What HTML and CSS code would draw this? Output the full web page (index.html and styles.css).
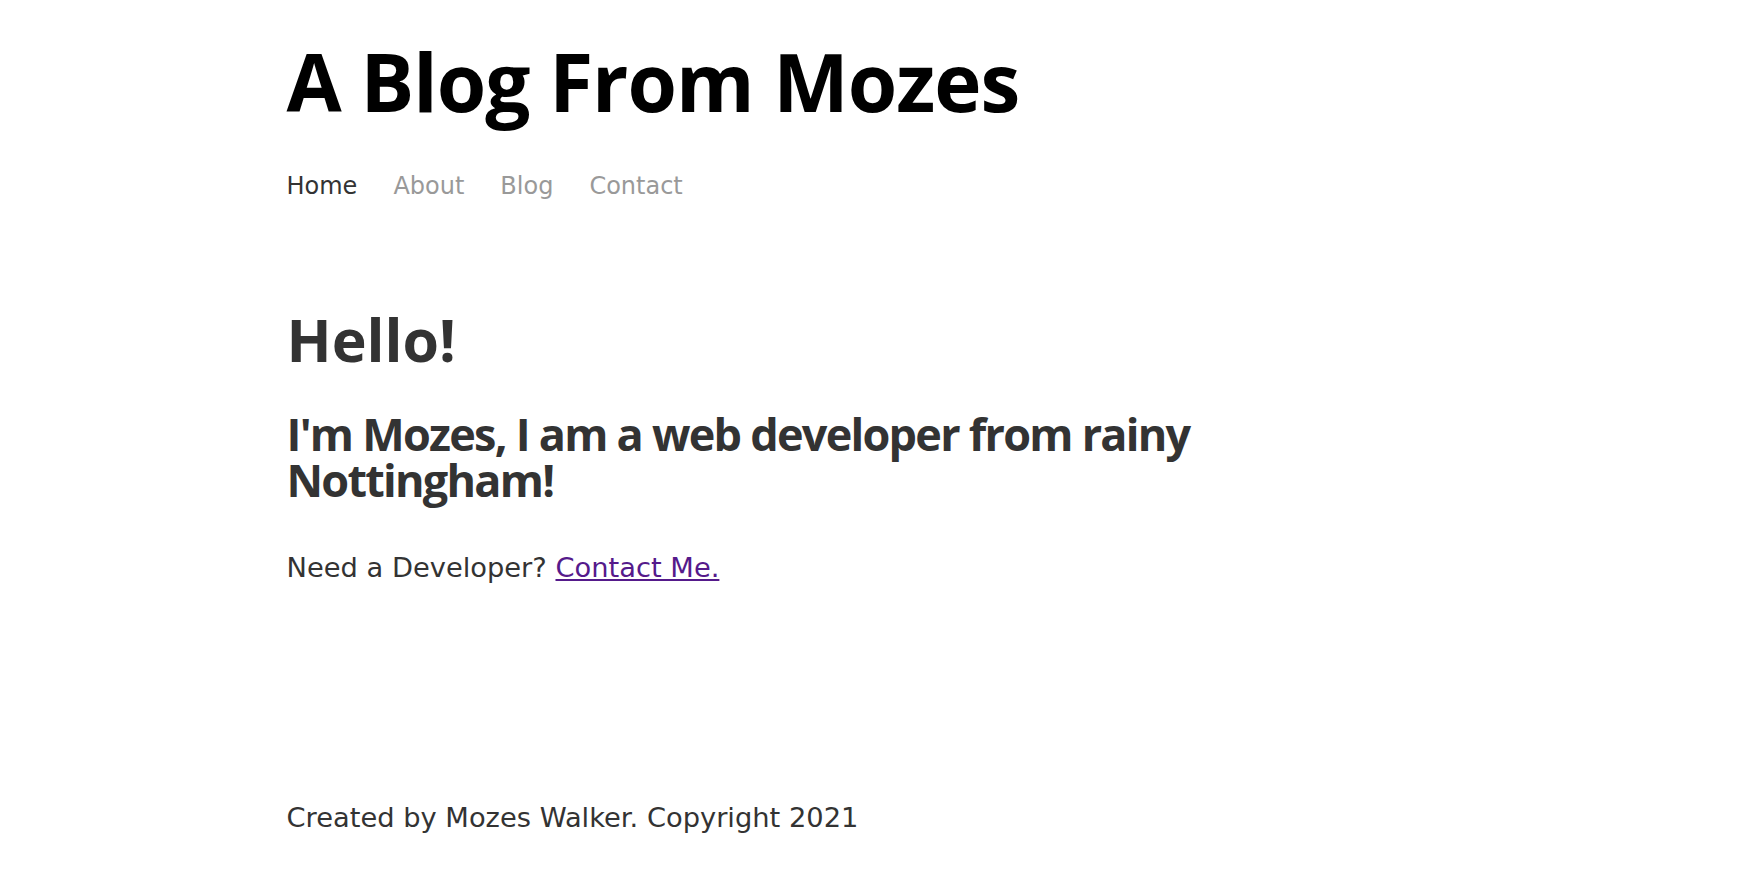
FILE: index.html
```html
<!DOCTYPE html>
<html lang="en">
<head>
<meta charset="utf-8">
<title>A Blog From Mozes</title>
<link rel="stylesheet" href="styles.css">
</head>
<body>
<div class="container">
  <header class="site-header">
    <h1 class="site-title">A Blog From Mozes</h1>
    <nav class="site-nav">
      <a class="nav-link active" href="#">Home</a>
      <a class="nav-link" href="#">About</a>
      <a class="nav-link" href="#">Blog</a>
      <a class="nav-link" href="#">Contact</a>
    </nav>
  </header>
  <main class="intro">
    <h1 class="intro-title">Hello!</h1>
    <h2 class="intro-sub">I'm Mozes, I am a web developer from rainy Nottingham!</h2>
    <p class="intro-text">Need a Developer? <a class="contact-link" href="#">Contact Me.</a></p>
  </main>
  <footer class="site-footer">
    <p class="footer-text">Created by Mozes Walker. Copyright 2021</p>
  </footer>
</div>
</body>
</html>
```
FILE: styles.css
```css
html, body {
  margin: 0;
  padding: 0;
  background: #fff;
}

body {
  font-family: "DejaVu Sans", sans-serif;
  color: #333;
}

.container {
  width: 1170px;
  margin: 0 auto;
}

.site-header {
  padding-top: 33px;
}

.site-title {
  margin: 0;
  font-family: "Open Sans", sans-serif;
  font-weight: 700;
  font-size: 80px;
  line-height: 96px;
  letter-spacing: -1px;
  color: #000;
}

.site-nav {
  display: flex;
  gap: 36px;
  margin-top: 41px;
  font-size: 24px;
  line-height: 32px;
}

.nav-link {
  color: #999;
  text-decoration: none;
}

.nav-link.active {
  color: #333;
}

.intro {
  padding-top: 102px;
}

.intro-title {
  margin: 0;
  font-family: "Open Sans", sans-serif;
  font-weight: 700;
  font-size: 59px;
  line-height: 70px;
  color: #333;
}

.intro-sub {
  margin: 37px 0 0;
  max-width: 960px;
  font-family: "Open Sans", sans-serif;
  font-weight: 700;
  font-size: 45px;
  line-height: 46px;
  letter-spacing: -1.75px;
  color: #333;
}

.intro-text {
  margin: 45px 0 0;
  font-size: 27.3px;
  line-height: 40px;
}

.contact-link {
  color: #551a8b;
  text-decoration: underline;
}

.site-footer {
  margin-top: 210px;
}

.footer-text {
  margin: 0;
  font-size: 27.3px;
  line-height: 40px;
}
```
